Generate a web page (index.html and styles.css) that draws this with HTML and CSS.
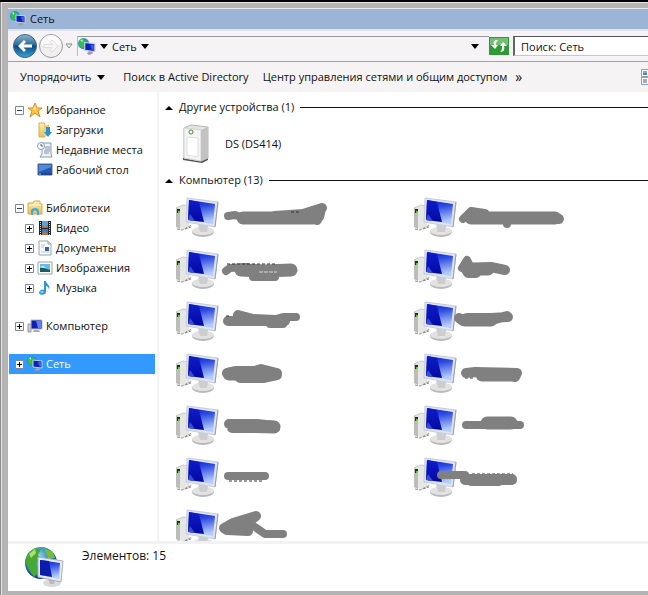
FILE: index.html
```html
<!DOCTYPE html>
<html lang="ru">
<head>
<meta charset="utf-8">
<title>Сеть</title>
<link rel="stylesheet" href="styles.css">
</head>
<body>
<svg class="defs" aria-hidden="true">
  <defs>
    <linearGradient id="screen" x1="0" y1="0" x2=".2" y2="1"><stop offset="0" stop-color="#0c1ed0"/><stop offset=".35" stop-color="#2a48e0"/><stop offset="1" stop-color="#b4ccfc"/></linearGradient>
    <linearGradient id="beam" x1="0" y1="0" x2="0" y2="1"><stop offset="0" stop-color="#0e1cc8"/><stop offset="1" stop-color="#0409a4"/></linearGradient>
    <radialGradient id="globe" cx=".4" cy=".3" r=".7"><stop offset="0" stop-color="#9fe0f4"/><stop offset=".5" stop-color="#2b86c8"/><stop offset="1" stop-color="#0b3f86"/></radialGradient>
    <linearGradient id="ball" x1="0" y1="0" x2="0" y2="1"><stop offset="0" stop-color="#8fb6cf"/><stop offset=".45" stop-color="#2d6c99"/><stop offset=".5" stop-color="#0d4a7c"/><stop offset="1" stop-color="#37a4dc"/></linearGradient>
    <linearGradient id="folder" x1="0" y1="0" x2="0" y2="1"><stop offset="0" stop-color="#fdf0b0"/><stop offset="1" stop-color="#e6bc52"/></linearGradient>
    <symbol id="computer" viewBox="0 0 46 48">
      <path d="M1 17 8 14 14 15V35L8 38 1 36Z" fill="#e6e6e4"/>
      <path d="M1 17 5 18V38L1 36Z" fill="#bcbcb8"/>
      <path d="M1 17 8 14 14 15" fill="none" stroke="#c8c8c6"/>
      <path d="M2 18H5V22H2Z" fill="#163c16"/><path d="M3 20H5V22H3Z" fill="#5fce34"/>
      <path d="M2 38 7 39 17 34M10 38 16 36" fill="none" stroke="#8c8c8c" stroke-dasharray="3 1"/>
      <ellipse cx="28" cy="41" rx="11" ry="5" fill="#b8b8b8"/>
      <ellipse cx="28" cy="40" rx="11" ry="4" fill="#e2e2e2"/>
      <path d="M23 33 33 35 32 41H25Z" fill="#cdcdcd"/>
      <path d="M12 7 43 11 40 36 11 31Z" fill="#dfe4f0" stroke="#c6cde0"/>
      <path d="M43 11 40 36" stroke="#9a9ea8"/>
      <path d="M14 9 40 13 38 33 13 29Z" fill="url(#screen)"/>
      <path d="M14 9 24 11 29 31 13 29Z" fill="url(#beam)"/>
      <path d="M13 29 15 23 20 30Z" fill="#3a4ed8"/>
    </symbol>
    <symbol id="net" viewBox="0 0 16 16">
      <circle cx="5" cy="5" r="5" fill="#2797bb"/>
      <path d="M1 3 4 1 7 2 5 5 6 8 3 9 1 6Z" fill="#39be45"/>
      <path d="M2 2 4 1 4 4Z" fill="#c2f2d4"/>
      <path d="M6 4 15 5V12L6 11Z" fill="#0b21bb" stroke="#cbd4e7"/>
      <path d="M11 6 14 6V11L12 10Z" fill="#3c62e0"/>
      <path d="M9 12H13V14L10 15 8 14Z" fill="#9aa3b3"/>
    </symbol>
    <symbol id="pc" viewBox="0 0 16 16">
      <path d="M1 6H4V14H1Z" fill="#ccc" stroke="#999"/>
      <path d="M4 2H15V11H4Z" fill="#1020b4" stroke="#b9bfd2"/>
      <path d="M9 3H14V10H11Z" fill="#6080e8"/><path d="M7 12H12L13 14H6Z" fill="#aaa"/>
    </symbol>
    <symbol id="plus" viewBox="0 0 9 9"><path d="M.5.5H8.500V8.500H.5Z" fill="#fff" stroke="#7e8794"/><path d="M2 4.500H7M4.500 2V7" stroke="#000"/></symbol>
    <symbol id="minus" viewBox="0 0 9 9"><path d="M.5.5H8.500V8.500H.5Z" fill="#fff" stroke="#7e8794"/><path d="M2 4.500H7" stroke="#24427c"/></symbol>
    <symbol id="down" viewBox="0 0 8 5"><path d="M0 0H8L4 5Z"/></symbol>
    <symbol id="up" viewBox="0 0 8 5"><path d="M0 5H8L4 1Z"/></symbol>
  </defs>
</svg>

<div class="window">
  <header class="title"><svg class="i16"><use href="#net"/></svg><span>Сеть</span></header>

  <nav class="address">
    <div class="travel">
      <button class="round" aria-label="Назад"><svg viewBox="0 0 26 26"><circle cx="13" cy="13" r="11.500" fill="url(#ball)" stroke="#456780"/><path d="M6 13 12 7 14 9 11.500 11.500H20V14.500H11.500L14 17 12 19Z" fill="#fff"/></svg></button>
      <button class="round" aria-label="Вперёд"><svg viewBox="0 0 26 26"><circle cx="13" cy="13" r="11.500" fill="#f0eeef" stroke="#9b9b9f"/><path d="M3 12A10 10 0 0 1 23 12Z" fill="#fafafa"/><path d="M20 13 14 7 12 9 14.500 11.500H6V14.500H14.500L12 17 14 19Z" fill="#f6f6f6" stroke="#dedede"/></svg></button>
      <button class="recent" aria-label="Журнал"><svg viewBox="0 0 8 6"><path d="M1 1H7L4 5Z" fill="#fff" stroke="#888"/></svg></button>
    </div>
    <div class="path">
      <svg class="i18"><use href="#net"/></svg>
      <button aria-label="Расположения"><svg class="arrow"><use href="#down"/></svg></button>
      <a href="#net-root">Сеть</a>
      <button aria-label="Вложенные"><svg class="arrow"><use href="#down"/></svg></button>
      <button class="history" aria-label="Прежние адреса"><svg class="arrow"><use href="#down"/></svg></button>
    </div>
    <button class="refresh" aria-label="Обновить"><svg viewBox="0 0 20 18"><path d="M0 0H20V18H0Z" fill="#2f9a35"/><path d="M1 1H19V8H1Z" fill="#72bf72"/><path d="M9 3C5 3 4 5 5 8H2L6 12 9 8H7C7 6 7 5 9 3ZM11 15C15 15 16 12 15 9H18L14 5 11 9H13C13 12 13 13 11 15Z" fill="#fff"/></svg></button>
    <input class="search" type="text" value="Поиск: Сеть" aria-label="Поиск">
  </nav>

  <div class="commands">
    <button class="organize">Упорядочить <svg class="arrow"><use href="#down"/></svg></button>
    <button>Поиск в Active Directory</button>
    <button>Центр управления сетями и общим доступом</button>
    <button class="more">»</button>
    <button class="view" aria-label="Вид"><svg viewBox="0 0 16 16"><path d="M.5.5H15.500V7.500H.5ZM.5 8.500H15.500V15.500H.5Z" fill="#fff" stroke="#8f9fae"/><path d="M2 2H6V6H2Z" fill="#72b4da"/><path d="M2 5H6M2 11H6M2 13H6" stroke="#35607c"/></svg></button>
  </div>

  <main class="body">
    <aside class="tree">
      <ul>
        <li><svg class="box"><use href="#minus"/></svg><svg class="i16" viewBox="0 0 16 16"><path d="M8 1 10 6 15 6 11 9 13 15 8 11 3 15 5 9 1 6 6 6Z" fill="#fcc83c" stroke="#e8852a"/><path d="M8 3 9 7 6 8Z" fill="#fff0a0"/></svg>Избранное</li>
        <li class="sub"><svg class="i16" viewBox="0 0 16 16"><path d="M2 1H7L8 2V15H2Z" fill="url(#folder)" stroke="#d9b152"/><path d="M7 3H12V14H7Z" fill="#f1ce6c"/><path d="M9 5H13V10H15L11 15 7 10H9Z" fill="#2891d8"/></svg>Загрузки</li>
        <li class="sub"><svg class="i16" viewBox="0 0 16 16"><path d="M5 1H14V12L15 15H3L5 12Z" fill="#eef2f6" stroke="#8b9aaa"/><path d="M8 5H13M8 7H13M7 9H13M7 11H12" stroke="#7c95b0"/><circle cx="4" cy="4" r="3.500" fill="#f6fafc" stroke="#8da2b5"/><path d="M4 2V4H6" fill="none" stroke="#567"/></svg>Недавние места</li>
        <li class="sub"><svg class="i16" viewBox="0 0 16 16"><path d="M1 2H15V13H1Z" fill="#2358b8" stroke="#5a6880"/><path d="M2 3H14V5L2 10Z" fill="#4d8bdd"/><path d="M1 12H15" stroke="#163460"/><path d="M2 12H4" stroke="#6ce0e0"/></svg>Рабочий стол</li>
      </ul>
      <ul>
        <li><svg class="box"><use href="#minus"/></svg><svg class="i16" viewBox="0 0 16 16"><path d="M1 3H6L7 1H13V4H15V14H1Z" fill="url(#folder)" stroke="#cfac55"/><path d="M2 5H14" stroke="#fff8d0"/><path d="M4 15V11C4 7 12 7 12 11V15H10V12C9 10 7 10 6 12V15Z" fill="#46a7dd"/></svg>Библиотеки</li>
        <li class="sub"><svg class="box"><use href="#plus"/></svg><svg class="i16" viewBox="0 0 16 16"><path d="M2 1H14V15H2Z" fill="#20262e"/><path d="M5 1H11V8H5Z" fill="#5aa4d6"/><path d="M5 9H11V15H5Z" fill="#3779b4"/><path d="M5 5 8 7 11 4V8H5ZM5 13 8 11 11 14V15H5Z" fill="#be6c3d"/><path d="M3.500 2V15M12.500 2V15" stroke="#c9d3dc" stroke-dasharray="1 1"/></svg>Видео</li>
        <li class="sub"><svg class="box"><use href="#plus"/></svg><svg class="i16" viewBox="0 0 16 16"><path d="M2 1H11L14 4V15H2Z" fill="#fbfcfd" stroke="#95a5b5"/><path d="M11 1V4H14" fill="#dde6ee" stroke="#95a5b5"/><path d="M4 5H8M4 7H7M4 12H12" stroke="#b7c8da"/><path d="M8 7H12V11H8Z" fill="#3763a6"/></svg>Документы</li>
        <li class="sub"><svg class="box"><use href="#plus"/></svg><svg class="i16" viewBox="0 0 16 16"><path d="M1 2H15V14H1Z" fill="#fff" stroke="#98a3ad"/><path d="M3 4H13V12H3Z" fill="#65bde6"/><path d="M3 8 7 8 13 10V12H3Z" fill="#1c5b5b"/><path d="M3 7 6 6 9 8Z" fill="#e8f8ff"/></svg>Изображения</li>
        <li class="sub"><svg class="box"><use href="#plus"/></svg><svg class="i16" viewBox="0 0 16 16"><path d="M7 1H9C9 4 14 5 12 10 12 7 10 6 9 6V12C9 15 3 16 2 13 2 10 5 9 7 10Z" fill="#2b94dc"/><ellipse cx="5" cy="12" rx="2" ry="1" fill="#8ccff4"/></svg>Музыка</li>
      </ul>
      <ul><li><svg class="box"><use href="#plus"/></svg><svg class="i16"><use href="#pc"/></svg>Компьютер</li></ul>
      <ul><li class="selected" id="net-root"><svg class="box"><use href="#plus"/></svg><svg class="i16"><use href="#net"/></svg>Сеть</li></ul>
    </aside>

    <section class="files">
      <h2><svg class="arrow"><use href="#up"/></svg>Другие устройства (1)</h2>
      <div class="device">
        <svg viewBox="0 0 32 40"><path d="M4 34 23 37 29 33V36L23 39 4 36Z" fill="#555"/><path d="M5 4 12 1 29 3V34L22 37 5 34Z" fill="#e4e4e4" stroke="#b5b5b5"/><path d="M5 4 22 6V37L5 34Z" fill="#f4f4f4" stroke="#d4d4d4"/><path d="M22 6 29 3V34L22 37Z" fill="#c2c2c2"/><path d="M8 13 19 14V33L8 31Z" fill="#fff" stroke="#dedede"/><circle cx="12" cy="8" r="2" fill="#fff" stroke="#3f8c25"/></svg>
        <span>DS (DS414)</span>
      </div>
      <h2><svg class="arrow"><use href="#up"/></svg>Компьютер (13)</h2>
      <div class="computers">
        <div class="item"><svg class="pc"><use href="#computer"/></svg><svg class="ink"><path class="w8" d="M53 25 60 24 66 26"/><path class="w10" d="M100 25 128 23 147 17M138 21 142 29M146 18 144 26"/><path class="w13" d="M68 27H138"/><path d="M116 21H126" class="specks"/></svg></div>
        <div class="item"><svg class="pc"><use href="#computer"/></svg><svg class="ink"><path class="w8" d="M50 28 58 20 72 22M94 32V33"/><path class="w13" d="M58 27H142"/><path class="w10" d="M130 26 146 28"/></svg></div>

        <div class="item"><svg class="pc"><use href="#computer"/></svg><svg class="ink"><path class="w8" d="M51 28 55 25 72 24M78 34H100"/><path class="w13" d="M66 27 90 28 116 27"/><path d="M52 21H102" class="specks"/><path class="flecks" d="M84 29H102"/></svg></div>
        <div class="item"><svg class="pc"><use href="#computer"/></svg><svg class="ink"><path class="w8" d="M49 25 54 17 58 25"/><path class="w10" d="M52 25 55 30 63 30M60 25 78 24 92 27"/><path class="w13" d="M56 26H75"/></svg></div>

        <div class="item"><svg class="pc"><use href="#computer"/></svg><svg class="ink"><path class="w10" d="M53 26 65 26 110 26M63 20 78 24 100 25"/><path class="w8" d="M94 26 108 22 121 22M95 29H108"/><path d="M51 21H56" class="specks"/></svg></div>
        <div class="item"><svg class="pc"><use href="#computer"/></svg><svg class="ink"><path class="w10" d="M46 23 50 26 75 26 94 21M55 23 78 23 95 22"/><path class="w13" d="M52 25H78"/></svg></div>

        <div class="item"><svg class="pc"><use href="#computer"/></svg><svg class="ink"><path class="w10" d="M52 26 60 24 80 24 86 22 102 26M65 31H88L102 28"/><path class="w13" d="M54 27H95"/></svg></div>
        <div class="item"><svg class="pc"><use href="#computer"/></svg><svg class="ink"><path d="M52 31H62" class="specks"/><path class="w10" d="M53 26 62 25 104 26 102 30"/><path class="w13" d="M69 28H100"/></svg></div>

        <div class="item"><svg class="pc"><use href="#computer"/></svg><svg class="ink"><path class="w10" d="M54 25 60 25 82 25 100 27M57 29H100"/><path class="w13" d="M60 27 99 28"/></svg></div>
        <div class="item"><svg class="pc"><use href="#computer"/></svg><svg class="ink"><path class="w8" d="M53 26H107"/><path class="w13" d="M74 24H98"/></svg></div>

        <div class="item"><svg class="pc"><use href="#computer"/></svg><svg class="ink"><path d="M54 30H87" class="specks"/><path class="w8" d="M53 25H90"/></svg></div>
        <div class="item"><svg class="pc"><use href="#computer"/></svg><svg class="ink"><path d="M59 23H100" class="specks"/><path class="w8" d="M28 24H52"/><path class="w10" d="M52 29H99M56 28H99M58 30H86"/></svg></div>

        <div class="item"><svg class="pc"><use href="#computer"/></svg><svg class="ink"><path class="w10 solid" d="M49 25 58 20 81 13 66 25 73 28 52 27Z"/><path class="w8" d="M72 20 80 24 90 31H108"/></svg></div>
      </div>
    </section>
  </main>

  <footer class="status">
    <svg viewBox="0 0 42 42"><circle cx="17" cy="17" r="16" fill="url(#globe)"/><path d="M4 7 11 2 17 3 14 9 17 13 12 19 15 27 10 31 5 24 1 15Z" fill="#46a933"/><path d="M20 2 29 6 31 12 25 13 22 8Z" fill="#72bd38"/><path d="M5 8 11 3 12 7 7 12Z" fill="#b1dc70"/><ellipse cx="28" cy="37" rx="9" ry="4" fill="#dadada"/><path d="M24 31H31L30 38H26Z" fill="#bbb"/><path d="M14 11 39 15 37 36 14 31Z" fill="#e7eaf1" stroke="#a8afbd"/><path d="M16 14 36 17 35 33 16 29Z" fill="url(#screen)"/><path d="M16 14 25 15 28 31 16 29Z" fill="#0b1cad"/></svg>
    <span>Элементов: 15</span>
  </footer>
</div>
</body>
</html>
```
FILE: styles.css
```css
* { box-sizing: border-box; }

body {
  margin: 0;
  height: 100vh;
  overflow: hidden;
  border-top: 2px solid #000;
  background: #b4b4b4;
  color: #111;
  font: 11px/16px "Open Sans", "Noto Sans", sans-serif;
}

button {
  display: flex;
  align-items: center;
  padding: 0;
  border: 0;
  background: none;
  color: inherit;
  font: inherit;
  white-space: nowrap;
}

a { color: inherit; text-decoration: none; }
svg { display: block; flex: none; }
.defs { position: absolute; width: 0; height: 0; }
.i16 { width: 16px; height: 16px; }
.i18 { width: 18px; height: 18px; }
.arrow { width: 8px; height: 5px; }
.box { width: 9px; height: 9px; }

.window {
  display: flex;
  flex-direction: column;
  height: 100%;
  padding: 6px 0 4px 7px;
  border-left: 1px solid #8c8c8c;
  box-shadow: inset 1px 1px #e4e4e4;
}

.title {
  display: flex;
  align-items: center;
  gap: 4px;
  flex: none;
  height: 21px;
  padding-left: 2px;
  border-top: 1px solid #e8e8e8;
  background: #9db5d5;
}

.address {
  display: flex;
  align-items: center;
  flex: none;
  height: 33px;
  padding-left: 4px;
  border-top: 2px solid #dfe2e6;
  border-bottom: 1px solid #a0a0a0;
  background: #f5f3f5;
}

.travel { display: flex; align-items: center; }
.round svg { width: 26px; height: 26px; }
.recent svg { width: 8px; height: 6px; margin: 0 4px 0 1px; }

.path {
  display: flex;
  align-items: center;
  flex: 1;
  gap: 4px;
  height: 20px;
  border-top: 1px solid #999;
  border-left: 1px solid #bbb;
}

.history { margin: 0 10px 0 auto; }
.refresh svg { width: 20px; height: 18px; }

.search {
  width: 135px;
  height: 20px;
  margin-left: 4px;
  padding: 0 6px;
  border: 1px solid #c8c8c8;
  border-top-color: #555;
  border-left: 2px solid #666;
  border-right: 0;
  background: #fff;
  color: #111;
  font: inherit;
}

.commands {
  display: flex;
  align-items: center;
  flex: none;
  gap: 14px;
  height: 30px;
  padding-left: 12px;
  overflow: hidden;
  background: #f5f3f4;
}

.organize { gap: 6px; margin-right: 4px; }
.more { margin-left: -6px; font-size: 14px; }
.view { width: 7px; margin-left: auto; overflow: hidden; }
.view svg { width: 16px; height: 16px; }

.body { display: flex; flex: 1; min-height: 0; background: #fff; }

.tree {
  flex: none;
  width: 151px;
  padding: 8px 2px 0 1px;
  border-right: 2px solid #f3f3f5;
}

.tree ul { margin: 0 0 18px; padding: 0; list-style: none; }

.tree li {
  display: flex;
  align-items: center;
  gap: 3px;
  height: 20px;
  padding-left: 6px;
  white-space: nowrap;
}

.tree .sub { padding-left: 16px; }
.tree .sub > .i16:first-child { margin-left: 12px; }
.tree .selected { background: #3399fe; color: #fff; }

.files { flex: 1; min-width: 0; overflow: hidden; padding: 6px 0 0 6px; }

.files h2 {
  display: flex;
  align-items: center;
  gap: 6px;
  height: 18px;
  margin: 0;
  font-size: 11px;
  font-weight: 400;
  white-space: nowrap;
}

.files h2::after { content: ""; flex: 1; height: 1px; background: #111; }

.device { display: flex; align-items: center; gap: 14px; height: 55px; padding-left: 14px; }
.device svg { width: 32px; height: 40px; }

.computers { display: grid; grid-template-columns: 238px 1fr; padding: 2px 0 0 10px; }
.item { position: relative; height: 52px; }
.pc { width: 46px; height: 48px; }

.ink {
  position: absolute;
  inset: 0;
  width: 100%;
  height: 100%;
  fill: none;
  stroke: #808080;
  stroke-linecap: round;
  stroke-linejoin: round;
}

.w8 { stroke-width: 8px; }
.w10 { stroke-width: 10px; }
.w13 { stroke-width: 13px; }
.solid { fill: #808080; }
.specks { stroke: #333; stroke-width: 1px; stroke-linecap: butt; stroke-dasharray: 3 2; }
.flecks { stroke: #d8d8d8; stroke-width: 1px; stroke-linecap: butt; stroke-dasharray: 4 1; }

.status {
  display: flex;
  flex: none;
  gap: 16px;
  height: 50px;
  padding: 2px 0 0 16px;
  border-top: 3px solid #f2f2f3;
  background: #fff;
  font-size: 12px;
}

.status svg { width: 42px; height: 42px; }
.status span { margin-top: 2px; }
```
